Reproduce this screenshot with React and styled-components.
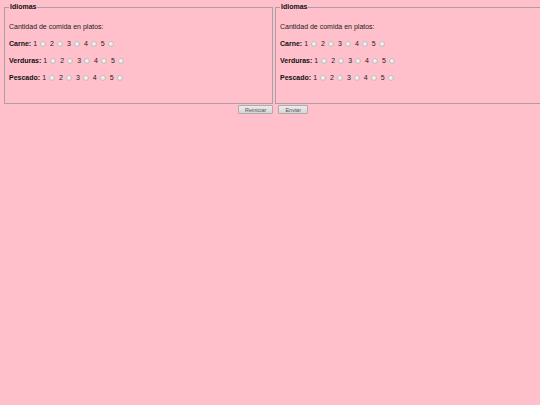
import React from 'react'
import styled, { createGlobalStyle } from 'styled-components'

const GlobalStyle = createGlobalStyle`
  html, body {
    margin: 0;
    padding: 0;
    background: #ffc0cb;
  }
  body {
    font-family: "Liberation Sans", Arial, sans-serif;
    color: #222;
    width: 540px;
    height: 405px;
    overflow: hidden;
  }
`

const grupos = ['Carne', 'Verduras', 'Pescado']
const valores = [1, 2, 3, 4, 5]

function Encuesta({ id }) {
  return (
    <Fieldset>
      <Legend>Idiomas</Legend>
      <Body>
        <Intro>Cantidad de comida en platos:</Intro>
        {grupos.map((g) => (
          <Row key={g}>
            <strong>{g}:</strong>
            {valores.map((v) => (
              <Option key={v}>
                {v}
                <Radio type="radio" name={`${id}-${g}`} value={v} />
              </Option>
            ))}
          </Row>
        ))}
      </Body>
    </Fieldset>
  )
}

export default function App() {
  return (
    <>
      <GlobalStyle />
      <Page>
        <Panels>
          <Encuesta id="a" />
          <Encuesta id="b" />
        </Panels>
        <Actions>
          <Button type="reset">Reiniciar</Button>
          <Button type="submit">Enviar</Button>
        </Actions>
      </Page>
    </>
  )
}

const Page = styled.form`
  padding: 3px 0 0 4px;
  width: 540px;
  box-sizing: border-box;
`

/* two columns, the second runs past the right edge of the window */
const Panels = styled.div`
  display: grid;
  grid-template-columns: 269px 269px;
  column-gap: 2px;
  width: 540px;
`

const Fieldset = styled.fieldset`
  width: 269px;
  min-width: 269px;
  height: 101px;
  box-sizing: border-box;
  margin: 0;
  padding: 0 4px;
  border: 1px solid #a8a0a2;
  font-size: 7px;
  line-height: 8px;
`

const Legend = styled.legend`
  padding: 0 1px;
  font-weight: bold;
  font-size: 7px;
  line-height: 8px;
  color: #111;
`

const Body = styled.div`
  display: flex;
  flex-direction: column;
  gap: 9px;
  padding-top: 12px;
`

const Intro = styled.div`
  color: #222;
`

const Row = styled.div`
  display: flex;
  align-items: center;
  white-space: nowrap;
  strong {
    color: #111;
    margin-right: 2px;
  }
`

const Option = styled.label`
  display: inline-flex;
  align-items: center;
  gap: 3px;
  margin-right: 4px;
`

const Radio = styled.input`
  appearance: none;
  margin: 0;
  width: 6px;
  height: 6px;
  border-radius: 50%;
  border: 1px solid #c4c0c0;
  background: radial-gradient(circle at 40% 35%, #fafafa 0%, #e6e6e6 60%, #d0d0d0 100%);
  box-sizing: border-box;
`

const Actions = styled.div`
  display: flex;
  justify-content: center;
  gap: 5px;
  margin-top: 1px;
  padding-left: 2px;
`

const Button = styled.button`
  font-family: "Liberation Sans", Arial, sans-serif;
  font-size: 5.5px;
  line-height: 6px;
  height: 9px;
  padding: 0 6px;
  color: #555;
  background: linear-gradient(#ececec, #d6d6d6);
  border: 1px solid #b0aaaa;
  border-radius: 1px;
`
